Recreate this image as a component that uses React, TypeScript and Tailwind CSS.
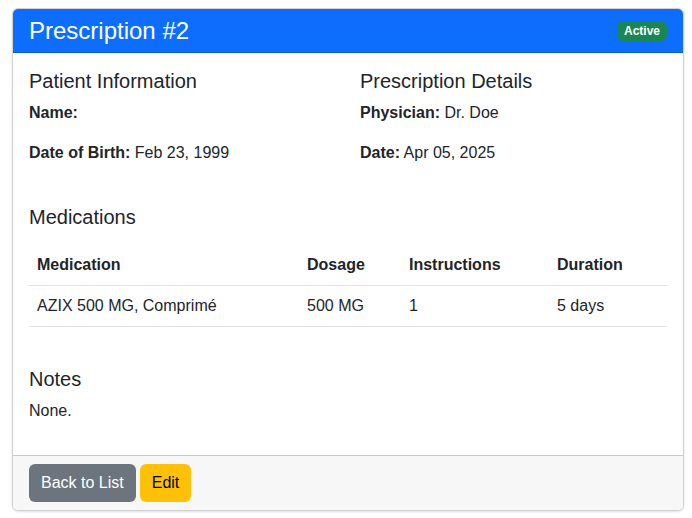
const meds = [
  { name: 'AZIX 500 MG, Comprimé', dosage: '500 MG', instructions: '1', duration: '5 days' },
];

export default function App() {
  return (
    <div className="min-h-screen bg-white text-[#212529] font-['Liberation_Sans',Arial,sans-serif] text-base leading-6">
      <div className="ml-3 mr-2 mt-2 rounded-md border border-black/[0.175] shadow-sm overflow-hidden">
        {/* header */}
        <div className="flex items-center justify-between bg-[#0d6efd] px-4 py-2 border-b border-black/[0.175]">
          <h4 className="text-2xl leading-[27px] text-white font-normal">Prescription #2</h4>
          <span className="rounded-md bg-[#198754] px-[7px] py-[4px] text-xs font-bold leading-[12px] text-white">Active</span>
        </div>

        {/* body */}
        <div className="p-4">
          <div className="grid grid-cols-2 gap-6">
            <div>
              <h5 className="mb-2 text-xl leading-6">Patient Information</h5>
              <p className="mb-4"><strong>Name:</strong> </p>
              <p className="mb-4"><strong>Date of Birth:</strong> Feb 23, 1999</p>
            </div>
            <div>
              <h5 className="mb-2 text-xl leading-6">Prescription Details</h5>
              <p className="mb-4"><strong>Physician:</strong> Dr. Doe</p>
              <p className="mb-4"><strong>Date:</strong> Apr 05, 2025</p>
            </div>
          </div>

          <h5 className="mt-6 mb-4 text-xl leading-6">Medications</h5>
          <table className="w-full border-collapse text-left">
            <thead>
              <tr className="border-b border-[#dee2e6]">
                <th className="w-[270px] p-2 font-bold">Medication</th>
                <th className="w-[102px] p-2 font-bold">Dosage</th>
                <th className="w-[148px] p-2 font-bold">Instructions</th>
                <th className="p-2 font-bold">Duration</th>
              </tr>
            </thead>
            <tbody>
              {meds.map((m) => (
                <tr key={m.name} className="border-b border-[#dee2e6]">
                  <td className="p-2">{m.name}</td>
                  <td className="p-2">{m.dosage}</td>
                  <td className="p-2">{m.instructions}</td>
                  <td className="p-2">{m.duration}</td>
                </tr>
              ))}
            </tbody>
          </table>

          <h5 className="mt-10 mb-2 text-xl leading-6">Notes</h5>
          <p className="mb-4">None.</p>
        </div>

        {/* footer */}
        <div className="flex gap-1 border-t border-black/[0.175] bg-[#f7f7f7] px-4 py-2">
          <button className="rounded-md bg-[#6c757d] px-3 py-[7px] text-white">Back to List</button>
          <button className="rounded-md bg-[#ffc107] px-3 py-[7px] text-black">Edit</button>
        </div>
      </div>
    </div>
  );
}
